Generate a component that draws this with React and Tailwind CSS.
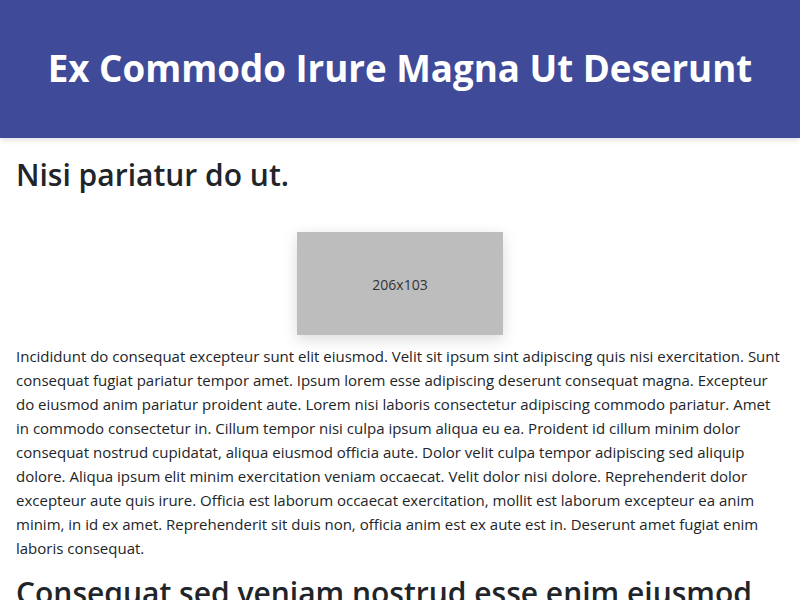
import React from 'react'

const body = 'Incididunt do consequat excepteur sunt elit eiusmod. Velit sit ipsum sint adipiscing quis nisi exercitation. Sunt consequat fugiat pariatur tempor amet. Ipsum lorem esse adipiscing deserunt consequat magna. Excepteur do eiusmod anim pariatur proident aute. Lorem nisi laboris consectetur adipiscing commodo pariatur. Amet in commodo consectetur in. Cillum tempor nisi culpa ipsum aliqua eu ea. Proident id cillum minim dolor consequat nostrud cupidatat, aliqua eiusmod officia aute. Dolor velit culpa tempor adipiscing sed aliquip dolore. Aliqua ipsum elit minim exercitation veniam occaecat. Velit dolor nisi dolore. Reprehenderit dolor excepteur aute quis irure. Officia est laborum occaecat exercitation, mollit est laborum excepteur ea anim minim, in id ex amet. Reprehenderit sit duis non, officia anim est ex aute est in. Deserunt amet fugiat enim laboris consequat.'

export default function App() {
    return (
        <div className="min-h-screen bg-white text-[#212529] font-['Open_Sans',sans-serif]">
            <header className="h-[138px] bg-[#3f4b99] flex items-center justify-center shadow-[0_2px_6px_rgba(0,0,0,0.12)]">
                <h1 className="text-[36.7px] font-bold text-white">Ex Commodo Irure Magna Ut Deserunt</h1>
            </header>
            <main className="px-4 pt-[17px]">
                <h2 className="text-[30px] font-semibold leading-[40px]">Nisi pariatur do ut.</h2>
                <div className="flex justify-center mt-[37px] mb-[9px]">
                    <div className="w-[206px] h-[103px] bg-[#bdbdbd] flex items-center justify-center pt-[2px] text-[14px] text-[#333] shadow-[0_4px_14px_rgba(0,0,0,0.15)]">
                        206x103
                    </div>
                </div>
                <p className="text-[15px] leading-[24px]">{body}</p>
                <h2 className="text-[30px] font-semibold leading-[40px] mt-[13px]">Consequat sed veniam nostrud esse enim eiusmod</h2>
            </main>
        </div>
    )
}
